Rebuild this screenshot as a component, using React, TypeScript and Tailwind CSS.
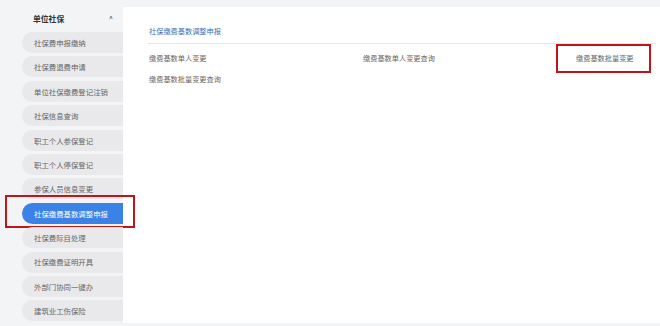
import React from 'react';

const menuItems = [
  '社保费申报缴纳',
  '社保费退费申请',
  '单位社保缴费登记注销',
  '社保信息查询',
  '职工个人参保登记',
  '职工个人停保登记',
  '参保人员信息变更',
  '社保缴费基数调整申报',
  '社保费际目处理',
  '社保缴费证明开具',
  '外部门协同一键办',
  '建筑业工伤保险',
];

const activeItem = '社保缴费基数调整申报';

export default function App() {
  return (
    <div
      className="w-[660px] h-[326px] bg-[#f3f4f6] overflow-hidden flex text-[7.4px] text-[#666] whitespace-nowrap"
      style={{ fontFamily: '"Noto Sans CJK SC", "Noto Sans", sans-serif' }}
    >
      {/* Sidebar */}
      <aside className="w-[123px] flex-shrink-0 flex flex-col pt-[11px]">
        <div className="flex items-center justify-between pl-[33px] pr-[10px] h-[15px]">
          <span className="font-bold text-[#333] text-[7.8px]">单位社保</span>
          <span className="text-[7px] text-[#333] leading-none">^</span>
        </div>
        <nav className="flex flex-col gap-[3.4px] mt-[6px] pl-[22px]">
          {menuItems.map((label) => {
            const isActive = label === activeItem;
            return (
              <div key={label} className="relative">
                <div
                  className={
                    isActive
                      ? 'h-[21px] flex items-center pl-[12px] rounded-l-full bg-[#3b82e6] text-white'
                      : 'h-[21px] flex items-center pl-[12px] rounded-l-full bg-[#e9e9ec]'
                  }
                >
                  {label}
                </div>
                {isActive && (
                  <div className="absolute -left-[17px] -top-[8px] w-[130px] h-[33px] border-[2.5px] border-[#c0151b]" />
                )}
              </div>
            );
          })}
        </nav>
      </aside>

      {/* Main */}
      <main className="flex-1 mt-[7px] h-[316px] bg-white pl-[25px] pr-[5px] pt-[18px] text-[7.2px]">
        <div className="text-[#3a6fb8] h-[13px] leading-[13px] pl-[1px]">社保缴费基数调整申报</div>
        <div className="mt-[5px] border-t border-[#e6e6e6]" />
        <div className="grid grid-cols-[214px_213px_1fr] gap-y-[8px] pt-[8px] pl-[1px]">
          <div className="h-[13px] leading-[13px]">缴费基数单人变更</div>
          <div className="h-[13px] leading-[13px]">缴费基数单人变更查询</div>
          <div className="h-[13px] leading-[13px] relative">
            缴费基数批量变更
            <div className="absolute -left-[20px] -top-[8px] w-[95px] h-[29px] border-[2.5px] border-[#c0151b]" />
          </div>
          <div className="h-[13px] leading-[13px]">缴费基数批量变更查询</div>
        </div>
      </main>
    </div>
  );
}
